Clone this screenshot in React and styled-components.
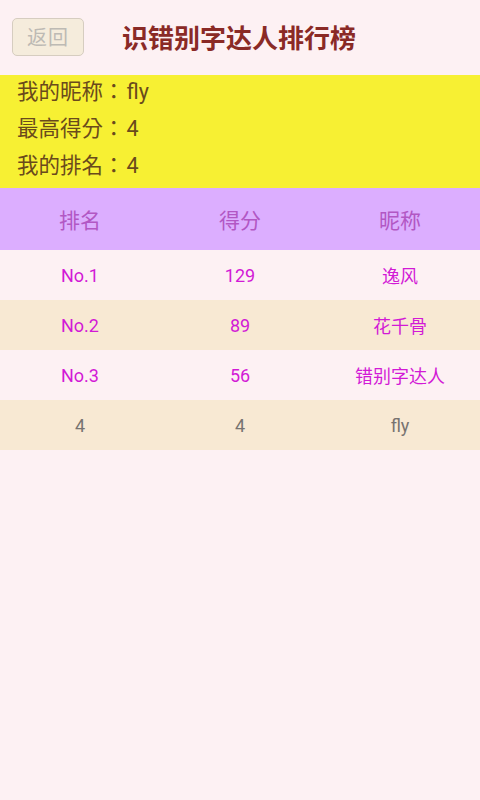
import React from 'react'
import styled, { createGlobalStyle } from 'styled-components'

const GlobalStyle = createGlobalStyle`
  body {
    margin: 0;
    background-color: #fdf1f3;
    font-family: Roboto, "Noto Sans CJK SC", sans-serif;
  }
`

const Page = styled.div`
  width: 480px;
  min-height: 800px;
  background-color: #fdf1f3;
`

const TopBar = styled.div`
  display: flex;
  align-items: center;
  height: 75px;
  padding: 0 12px 2px;
  box-sizing: border-box;
`

const BackButton = styled.button`
  width: 72px;
  height: 38px;
  padding: 0;
  margin: 0;
  border: 1px solid #d6cdc0;
  border-radius: 5px;
  background-color: #f5ecdc;
  color: #bdbab4;
  font-family: inherit;
  font-size: 20px;
  letter-spacing: 1px;
`

const Title = styled.h1`
  margin: 0 0 0 38px;
  color: #8a2a26;
  font-size: 26px;
  font-weight: 700;
`

const InfoBlock = styled.div`
  background-color: #f7f033;
  padding: 0 17px 6px;
  height: 113px;
  box-sizing: border-box;
  display: flex;
  flex-direction: column;
  justify-content: center;
`

const InfoLine = styled.div`
  color: #6a4a1c;
  font-family: Roboto, "Noto Sans CJK TC", sans-serif;
  font-size: 21.5px;
  line-height: 37px;
`

const Value = styled.span`
  margin-left: 2px;
`

const Row = styled.div`
  display: grid;
  grid-template-columns: repeat(3, 1fr);
  align-items: center;
  height: ${(p) => p.$height || 50}px;
  background-color: ${(p) => p.$bg};
`

const Cell = styled.div`
  text-align: center;
  color: ${(p) => p.$color};
  font-size: ${(p) => p.$size}px;
`

const info = [
  ['我的昵称', 'fly'],
  ['最高得分', '4'],
  ['我的排名', '4'],
]

const ranks = [
  { rank: 'No.1', score: 129, name: '逸风' },
  { rank: 'No.2', score: 89, name: '花千骨' },
  { rank: 'No.3', score: 56, name: '错别字达人' },
]

const App = () => {
  return (
    <Page>
      <GlobalStyle />
      <TopBar>
        <BackButton>返回</BackButton>
        <Title>识错别字达人排行榜</Title>
      </TopBar>
      <InfoBlock>
        {info.map(([label, value]) => (
          <InfoLine key={label}>
            {label}：<Value>{value}</Value>
          </InfoLine>
        ))}
      </InfoBlock>
      <Row $bg="#dcaeff" $height={62}>
        <Cell $color="#b257c4" $size={21}>排名</Cell>
        <Cell $color="#b257c4" $size={21}>得分</Cell>
        <Cell $color="#b257c4" $size={21}>昵称</Cell>
      </Row>
      {ranks.map((r, i) => (
        <Row key={r.rank} $bg={i % 2 ? '#f8e9d3' : '#fdf1f3'}>
          <Cell $color="#d21ad6" $size={18}>{r.rank}</Cell>
          <Cell $color="#d21ad6" $size={18}>{r.score}</Cell>
          <Cell $color="#d21ad6" $size={18}>{r.name}</Cell>
        </Row>
      ))}
      <Row $bg="#f8e9d3">
        <Cell $color="#777370" $size={18}>4</Cell>
        <Cell $color="#777370" $size={18}>4</Cell>
        <Cell $color="#777370" $size={18}>fly</Cell>
      </Row>
    </Page>
  )
}

export default App
